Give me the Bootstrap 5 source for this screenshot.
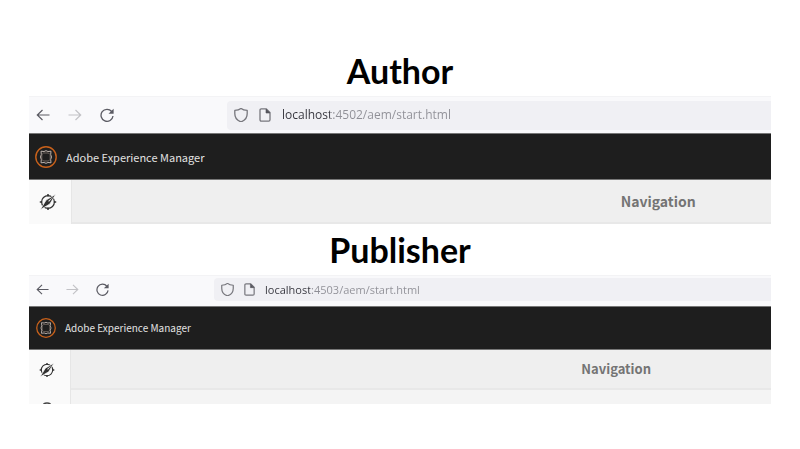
<!DOCTYPE html>
<html lang="en">
<head>
<meta charset="utf-8">
<meta name="viewport" content="width=device-width, initial-scale=1">
<title>Author and Publisher</title>
<link href="https://cdn.jsdelivr.net/npm/bootstrap@5.3.0/dist/css/bootstrap.min.css" rel="stylesheet">
<style>
body { background: #fff; font-family: "Open Sans", "Noto Sans", sans-serif; }
.page { padding: 45px 29px; }
.title { font: 700 34px/51px Lato, sans-serif; color: #000; margin: 0; }
.shot { --bar: 37px; --head: 47px; --nav: 44px; --rail: 43px; --step: 18px; --ico: 14px; --url: 12px; --brand: 11px; --navtext: 14px; --logo: 22px; --navx: 78.5%; --start: 7px; --field: 113px; --fgap: 10px; --brandgap: 9px; --host: 48px; }
.shot-small { --bar: 31px; --head: 44px; --nav: 40px; --rail: 42px; --step: 17px; --ico: 13px; --url: 11px; --brand: 10px; --navtext: 13px; --logo: 20px; --navx: 72.9%; --start: 7px; --field: 105px; --fgap: 9px; --host: 45px; }
.toolbar { height: var(--bar); padding-left: var(--start); background: #f9f9fb; border-top: 1px solid #f3f3f5; }
.shot-small .toolbar { padding-bottom: 3px; }
.tool { border: 0; padding: 0; background: none; color: #5b5b63; line-height: 0; margin-right: var(--step); }
.tool:disabled { color: #c2c2c6; }
.tool:last-of-type { margin-right: var(--field); }
.tool svg, .field svg { width: var(--ico); height: var(--ico); overflow: visible; }
.field { height: calc(var(--bar) - 8px); background: #f0f0f4; border-radius: 4px 0 0 4px; padding-left: 7px; gap: var(--fgap); color: #77777d; }
.url { border: 0; outline: 0; padding: 0; min-width: 0; font-size: var(--url); line-height: 20px; color: transparent; background: linear-gradient(90deg, #34343c var(--host), #8f8f96 var(--host)); -webkit-background-clip: text; background-clip: text; }
.masthead { height: var(--head); background: #1e1e1e; border-top: 1px solid #777; border-bottom: 1px solid #777; padding-left: 6px; gap: var(--brandgap); color: #e2e2e2; font: 400 var(--brand)/20px "Noto Sans CJK SC", "Noto Sans", sans-serif; }
.shot-small .masthead { padding-left: 7px; }
.masthead svg { width: var(--logo); height: var(--logo); }
.rail { width: var(--rail); flex: none; background: #fafafa; border-right: 1px solid #e6e6e6; overflow: hidden; }
.rail a { height: var(--nav); padding-right: 5px; color: #303030; }
.rail svg { width: 18px; height: 18px; flex: none; }
.shot-small .rail svg { width: 16px; height: 16px; }
.navrow { height: var(--nav); background: #efefef; border-bottom: 2px solid #e8e8e8; }
.navrow h2 { margin: 0; padding-left: var(--navx); font: 700 var(--navtext)/20px "Noto Sans CJK SC", "Noto Sans", sans-serif; color: #747474; }
.pane { background: #f4f4f4; }
.peek { height: 14px; padding-right: 5px; overflow: hidden; }
</style>
</head>
<body>
<svg class="d-none" xmlns="http://www.w3.org/2000/svg">
  <symbol id="back" viewBox="0 0 14 14"><path d="M13.5 7H1.5M6.5 2 1.3 7l5.2 5" fill="none" stroke="currentColor" stroke-width="1.2"/></symbol>
  <symbol id="forward" viewBox="0 0 14 14"><path d="M.5 7h12M7.500 2l5.200 5-5.200 5" fill="none" stroke="currentColor" stroke-width="1.2"/></symbol>
  <symbol id="reload" viewBox="0 0 14 14"><path d="M11.700 3.500A6 6 0 1 0 13 8" fill="none" stroke="currentColor" stroke-width="1.300"/><path d="M13.600.7v5H8.500z" fill="currentColor"/></symbol>
  <symbol id="shield" viewBox="0 0 14 14"><path d="M7 .4C5.400 1.700 3.200 2.300.8 2.400v3.200C.8 9.400 3.300 12.700 7 13.800c3.700-1.100 6.200-4.400 6.200-8.200V2.400C10.800 2.300 8.600 1.700 7 .4z" fill="none" stroke="currentColor" stroke-width="1.300" stroke-linejoin="round"/></symbol>
  <symbol id="doc" viewBox="0 0 14 14"><path d="M3.300.9h5l3.700 3.700v7.200q0 1.300-1.300 1.300H3.300Q2 13.100 2 11.800V2.200Q2 .9 3.300.9z" fill="none" stroke="currentColor" stroke-width="1.300"/><path d="M8 1v4h4z" fill="#55555c" stroke="#55555c" stroke-width=".6"/></symbol>
  <symbol id="aem" viewBox="0 0 22 22"><circle cx="11" cy="11" r="10.200" fill="none" stroke="#c8611b" stroke-width="1.400"/><path d="M6 5.200 9 5.500q2-1.600 4 0l3-.3-.3 3.300q1.600 2.500 0 5l.3 3.300-3-.3q-2 1.600-4 0l-3 .3.300-3.300q-1.600-2.500 0-5z" fill="none" stroke="#bdb3ad" stroke-width="1"/><path d="M8.500 7h5l1.700 1.700v4.600L13.500 15h-5l-1.700-1.700V8.700z" fill="none" stroke="#94857c" stroke-width=".7"/></symbol>
  <symbol id="compass" viewBox="0 0 18 18"><circle cx="9" cy="9" r="6.400" fill="none" stroke="currentColor" stroke-width="1.200"/><path d="M9 1v2.400M9 14.600V17M.8 9h2.400M14.800 9h2.400" stroke="currentColor" stroke-width="1.500"/><path d="M16.700 1.300 7.100 7 1.300 16.700l9.600-5.700z" fill="currentColor" stroke="#fafafa" stroke-width=".8"/><path d="M9.200 8 14.300 3.700 10 8.800z" fill="#fafafa"/></symbol>
</svg>
<main class="page">
  <h1 class="title text-center">Author</h1>
  <section class="shot" aria-label="Author instance">
    <div class="toolbar d-flex align-items-center">
      <button class="tool" type="button" aria-label="Back"><svg><use href="#back"/></svg></button>
      <button class="tool" type="button" aria-label="Forward" disabled><svg><use href="#forward"/></svg></button>
      <button class="tool" type="button" aria-label="Reload"><svg><use href="#reload"/></svg></button>
      <div class="field d-flex align-items-center flex-grow-1">
        <svg><use href="#shield"/></svg><svg><use href="#doc"/></svg>
        <input class="url flex-grow-1" type="text" aria-label="Address" value="localhost:4502/aem/start.html">
      </div>
    </div>
    <header class="masthead d-flex align-items-center"><svg aria-hidden="true"><use href="#aem"/></svg><span>Adobe Experience Manager</span></header>
    <div class="d-flex">
      <nav class="rail"><a href="#" class="d-flex align-items-center justify-content-center" aria-label="Navigation"><svg><use href="#compass"/></svg></a></nav>
      <div class="pane flex-grow-1"><div class="navrow d-flex align-items-center"><h2 class="w-100">Navigation</h2></div></div>
    </div>
  </section>
  <h1 class="title text-center">Publisher</h1>
  <section class="shot shot-small" aria-label="Publisher instance">
    <div class="toolbar d-flex align-items-center">
      <button class="tool" type="button" aria-label="Back"><svg><use href="#back"/></svg></button>
      <button class="tool" type="button" aria-label="Forward" disabled><svg><use href="#forward"/></svg></button>
      <button class="tool" type="button" aria-label="Reload"><svg><use href="#reload"/></svg></button>
      <div class="field d-flex align-items-center flex-grow-1">
        <svg><use href="#shield"/></svg><svg><use href="#doc"/></svg>
        <input class="url flex-grow-1" type="text" aria-label="Address" value="localhost:4503/aem/start.html">
      </div>
    </div>
    <header class="masthead d-flex align-items-center"><svg aria-hidden="true"><use href="#aem"/></svg><span>Adobe Experience Manager</span></header>
    <div class="d-flex">
      <nav class="rail">
        <a href="#" class="d-flex align-items-center justify-content-center" aria-label="Navigation"><svg><use href="#compass"/></svg></a>
        <div class="peek d-flex justify-content-center"><svg viewBox="0 0 16 16" aria-hidden="true"><path d="M4.500 14q3.500-2 7 0" fill="none" stroke="#444" stroke-width="1.500"/></svg></div>
      </nav>
      <div class="pane flex-grow-1"><div class="navrow d-flex align-items-center"><h2 class="w-100">Navigation</h2></div></div>
    </div>
  </section>
</main>
<script src="https://cdn.jsdelivr.net/npm/bootstrap@5.3.0/dist/js/bootstrap.bundle.min.js"></script>
</body>
</html>
